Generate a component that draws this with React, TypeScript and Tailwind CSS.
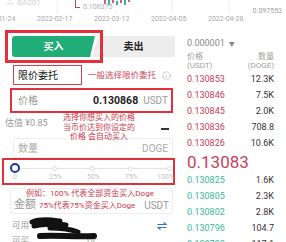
import { Info } from 'lucide-react';

const asks: [string, string][] = [
  ['0.130853', '12.3K'],
  ['0.130846', '7.5K'],
  ['0.130845', '2.0K'],
  ['0.130836', '708.8'],
  ['0.130826', '10.6K'],
];

const bids: [string, string][] = [
  ['0.130825', '1.6K'],
  ['0.130805', '2.3K'],
  ['0.130802', '2.8K'],
  ['0.130796', '104.7'],
  ['0.130793', '117.1'],
];

const dates = ['2022-01-24', '2022-02-17', '2022-03-12', '2022-04-05', '2022-04-28'];

function ChartStrip() {
  return (
    <div className="relative h-[14px]">
      <svg className="absolute left-0 top-0" width="286" height="14">
        <line x1="57" y1="0" x2="57" y2="14" stroke="#f0f0f0" />
        <line x1="172" y1="0" x2="172" y2="14" stroke="#f0f0f0" />
        <line x1="229" y1="0" x2="229" y2="14" stroke="#f0f0f0" />
        <line x1="75.5" y1="0" x2="75.5" y2="7.5" stroke="#c8405a" />
        <line x1="75" y1="7.5" x2="80" y2="7.5" stroke="#c8405a" />
        <rect x="104" y="0" width="2" height="4" fill="#d0607a" />
        <rect x="108" y="0" width="2" height="5" fill="#3ab795" />
        <rect x="112" y="0" width="2" height="3" fill="#d0607a" />
        <rect x="116" y="1" width="2" height="4" fill="#3ab795" />
        <rect x="120" y="0" width="2" height="3" fill="#d0607a" />
        <rect x="124" y="0" width="2" height="5" fill="#3ab795" />
        <rect x="128" y="0" width="2" height="2" fill="#d0607a" />
      </svg>
      <div className="absolute left-[6px] top-[-3px] flex items-center gap-[3px] text-[8px] text-[#d4d4d4]">
        <span>⁂</span>
        <span>BA201</span>
      </div>
      <span className="absolute left-[83px] top-[3px] text-[7px] leading-[8px] text-[#b0b0b0]">0.106375</span>
      <span className="absolute right-[4px] top-[7px] text-[7px] leading-[8px] text-[#a0a0a0]">0.097553</span>
    </div>
  );
}

function Scribble() {
  return (
    <svg width="80" height="30" className="absolute left-[26px] top-[-2px]">
      <path d="M6 6 C16 2 26 4 34 5 M8 10 C20 8 30 7 40 9 M24 12 C34 12 44 13 52 16" stroke="#111" strokeWidth="5" fill="none" strokeLinecap="round" />
      <path d="M14 20 C30 19 50 21 68 20" stroke="#111" strokeWidth="6" fill="none" strokeLinecap="round" />
    </svg>
  );
}

export default function App() {
  return (
    <div className="w-[286px] h-[242px] overflow-hidden bg-white font-['Roboto','Noto_Sans_CJK_SC',sans-serif] text-[#333]">
      <ChartStrip />
      <div className="flex h-[10px] items-center ml-[-20px] gap-[21px] text-[7px] leading-[10px] text-[#a8a8a8] whitespace-nowrap">
        {dates.map((d) => (
          <span key={d} className="w-[36px]">{d}</span>
        ))}
      </div>
      <div className="h-[5px]" />

      <div className="flex">
        {/* left: order form */}
        <div className="w-[180px] shrink-0">
          <div className="relative h-[33px] flex pt-[7px]">
            <div className="ml-[12px] w-[83px] h-[21px] rounded-l-[3px] bg-[#20ad78] flex items-center justify-center text-white text-[10px] font-bold [clip-path:polygon(0_0,100%_0,calc(100%-5px)_100%,0_100%)]">
              买入
            </div>
            <div className="ml-[-3px] w-[83px] h-[21px] bg-[#ededed] flex items-center justify-center text-[10px] font-semibold text-[#222] [clip-path:polygon(6px_0,100%_0,100%_100%,0_100%)]">
              卖出
            </div>
            <div className="absolute left-[5px] top-[1px] w-[98px] h-[33px] border-[3px] border-[#e5303c]" />
          </div>

          <div className="mt-[3px] h-[20px] flex items-center">
            <div className="ml-[13px] w-[69px] h-[20px] border-[1.5px] border-[#c94553] flex items-center pl-[4px] text-[10px] text-[#111]">
              限价委托
            </div>
            <span className="ml-[6px] text-[8.5px] text-[#d04658] whitespace-nowrap">一般选择限价委托</span>
            <Info className="ml-auto mr-[9px] w-[9px] h-[9px] text-[#aaa]" strokeWidth={1.5} />
          </div>

          <div className="mt-[3px] ml-[10px] w-[163px] h-[25px] border-2 border-[#e5303c] flex items-center pl-[6px] pr-[3px]">
            <span className="text-[10px] text-[#999]">价格</span>
            <span className="ml-auto text-[10.5px] font-bold text-[#222]">0.130868</span>
            <span className="ml-[5px] text-[10px] text-[#999]">USDT</span>
          </div>

          <div className="h-[25px] flex">
            <div className="w-[58px] pl-[5px] pt-[5px] text-[9px] leading-[10px] text-[#999] whitespace-nowrap">估值 ¥0.85</div>
            <div className="w-[82px] text-center text-[8px] leading-[9.5px] text-[#c93a4f]">
              <div>选择你想买入的价格</div>
              <div>当币价达到你设定的</div>
              <div>价格 会自动买入</div>
            </div>
            <div className="ml-auto mr-[11px] mt-[15px] w-[8px] h-[2px] bg-[#333]" />
          </div>

          <div className="ml-[13px] w-[160px] h-[20px] border border-[#eeeeee] rounded-[2px] flex items-center px-[4px] text-[10px] text-[#aaa]">
            <span>数量</span>
            <span className="ml-auto">DOGE</span>
          </div>

          <div className="ml-[2px] w-[173px] h-[27px] border-2 border-[#e0303c]">
            <div className="relative h-full">
              <div className="absolute left-[13px] top-[8px] w-[153px] h-px bg-[#e4e4e4]" />
              <div className="absolute left-[6px] top-[3px] w-[10px] h-[10px] rounded-full border-2 border-[#1c3c94] bg-white" />
              <div className="absolute left-[48px] top-[6px] w-[5px] h-[5px] rounded-full border border-[#ddd] bg-white" />
              <div className="absolute left-[86px] top-[6px] w-[5px] h-[5px] rounded-full border border-[#ddd] bg-white" />
              <div className="absolute left-[124px] top-[6px] w-[5px] h-[5px] rounded-full border border-[#ddd] bg-white" />
              <div className="absolute left-[163px] top-[6px] w-[5px] h-[5px] rounded-full border border-[#ddd] bg-white" />
              <span className="absolute left-[9px] top-[13px] text-[7px] leading-[8px] text-[#c4c4c4]">0</span>
              <span className="absolute left-[45px] top-[13px] text-[7px] leading-[8px] text-[#c4c4c4]">25%</span>
              <span className="absolute left-[83px] top-[13px] text-[7px] leading-[8px] text-[#c4c4c4]">50%</span>
              <span className="absolute left-[121px] top-[13px] text-[7px] leading-[8px] text-[#c4c4c4]">75%</span>
              <span className="absolute left-[153px] top-[13px] text-[7px] leading-[8px] text-[#c4c4c4]">100%</span>
            </div>
          </div>

          <div className="mt-[3px] ml-[10px] w-[163px] h-[26px] border border-[#eeeeee] rounded-[2px] pl-[3px] pr-[3px]">
            <div className="pl-[12px] text-[8px] leading-[9px] text-[#c93a4f] whitespace-nowrap">例如：100% 代表全部资金买入Doge</div>
            <div className="flex items-center h-[15px]">
              <span className="text-[11px] text-[#999]">金额</span>
              <span className="ml-[3px] text-[8px] text-[#c93a4f] whitespace-nowrap">75%代表75%资金买入Doge</span>
              <span className="ml-auto text-[10px] text-[#999]">USDT</span>
            </div>
          </div>

          <div className="relative mt-[4px] pl-[12px] text-[8.5px] text-[#999]">
            <div className="flex items-center h-[15px]">
              <span>可用</span>
              <svg width="10" height="8" className="ml-auto mr-[13px]" viewBox="0 0 10 8">
                <path d="M0.5 2.5 H9 L6.5 0.5" stroke="#3a6fd8" strokeWidth="1.2" fill="none" />
                <path d="M9.5 5.5 H1 L3.5 7.5" stroke="#3a6fd8" strokeWidth="1.2" fill="none" />
              </svg>
            </div>
            <div className="flex items-center h-[15px]">
              <span>可买</span>
              <span className="ml-[58px] text-[#aaa]">GE</span>
            </div>
            <Scribble />
          </div>
        </div>

        {/* right: order book */}
        <div className="flex-1 pl-[7px] pr-[12px] pt-[9px]">
          <div className="h-[11px] flex items-center text-[9px] text-[#888]">
            <span>0.000001</span>
            <span className="ml-[4px] text-[6px]">▼</span>
          </div>
          <div className="mt-[3px] flex justify-between text-[8px] leading-[9px] text-[#a0a0a0]">
            <div>
              <div>价格</div>
              <div>(USDT)</div>
            </div>
            <div className="text-right">
              <div>数量</div>
              <div>(DOGE)</div>
            </div>
          </div>
          <div className="mt-[2px]">
            {asks.map(([p, q]) => (
              <div key={p} className="h-[16px] flex items-center justify-between text-[9px]">
                <span className="text-[#c8405a]">{p}</span>
                <span className="text-[#333]">{q}</span>
              </div>
            ))}
            <div className="h-[21px] flex items-center text-[17px] text-[#c8405a]">0.13083</div>
            {bids.map(([p, q]) => (
              <div key={p} className="h-[16px] flex items-center justify-between text-[9px]">
                <span className="text-[#3ab795]">{p}</span>
                <span className="text-[#333]">{q}</span>
              </div>
            ))}
          </div>
        </div>
      </div>
    </div>
  );
}
